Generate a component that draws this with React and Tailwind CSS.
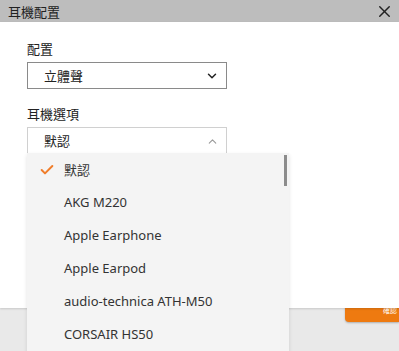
import { ChevronDown, ChevronUp, X, Check } from 'lucide-react';

const OPTIONS = [
  '默認',
  'AKG M220',
  'Apple Earphone',
  'Apple Earpod',
  'audio-technica ATH-M50',
  'CORSAIR HS50',
];

const CJK = { fontFamily: '"Noto Sans CJK TC", "Noto Sans", sans-serif' };
const LATIN = { fontFamily: '"Noto Sans", "Noto Sans CJK TC", sans-serif' };

export default function App() {
  return (
    <div className="relative w-[399px] h-[351px] overflow-hidden bg-[#e9e9e9]" style={CJK}>
      {/* Title bar */}
      <div className="h-[22px] bg-[#bdbdbd] flex items-center justify-between pl-[8px] pr-[5px]">
        <span className="text-[13px] text-[#222] leading-none">耳機配置</span>
        <X className="w-[19px] h-[19px] text-[#222]" strokeWidth={1.8} />
      </div>

      {/* Body */}
      <div className="h-[286px] bg-white shadow-[0_1px_2px_rgba(0,0,0,0.15)] relative z-10 pl-[27px] pt-[18px]">
        <div className="text-[13px] text-[#222] leading-[18px]">配置</div>
        <div className="mt-[4px] w-[200px] h-[27px] border border-[#8a8a8a] flex items-center justify-between pl-[16px] pr-[7px]">
          <span className="text-[13px] text-[#222]">立體聲</span>
          <ChevronDown className="w-[14px] h-[14px] text-[#222]" strokeWidth={2.5} />
        </div>

        <div className="mt-[16px] text-[13px] text-[#222] leading-[18px]">耳機選項</div>
        <div className="mt-[4px] w-[200px] h-[27px] border border-[#d0d0d0] border-b-0 flex items-center justify-between pl-[16px] pr-[7px]">
          <span className="text-[13px] text-[#222]">默認</span>
          <ChevronUp className="w-[13px] h-[13px] text-[#999]" strokeWidth={2} />
        </div>
      </div>

      {/* Footer button */}
      <div className="flex justify-end">
        <div className="mt-[-8px] w-[54px] h-[22px] bg-[#ee7a10] rounded-bl-[4px] shadow-[0_1px_2px_rgba(0,0,0,0.25)] flex items-start justify-end pr-[2px] pt-[7px]">
          <span className="text-[7px] text-white leading-none">確認</span>
        </div>
      </div>

      {/* Dropdown list */}
      <div className="absolute left-[27px] top-[153px] w-[262px] h-[210px] bg-[#f4f4f4] z-20 shadow-[0_2px_4px_rgba(0,0,0,0.12)]">
        <div className="absolute right-[2px] top-[2px] w-[3px] h-[31px] bg-[#8c8c8c]" />
        {OPTIONS.map((opt, i) => (
          <div key={opt} className="h-[33px] flex items-center">
            <div className="w-[37px] flex justify-end pr-[9px]">
              {i === 0 && <Check className="w-[16px] h-[16px] text-[#f07d2a]" strokeWidth={3} />}
            </div>
            <span className="text-[13px] text-[#333]" style={i === 0 ? CJK : LATIN}>
              {opt}
            </span>
          </div>
        ))}
      </div>
    </div>
  );
}
